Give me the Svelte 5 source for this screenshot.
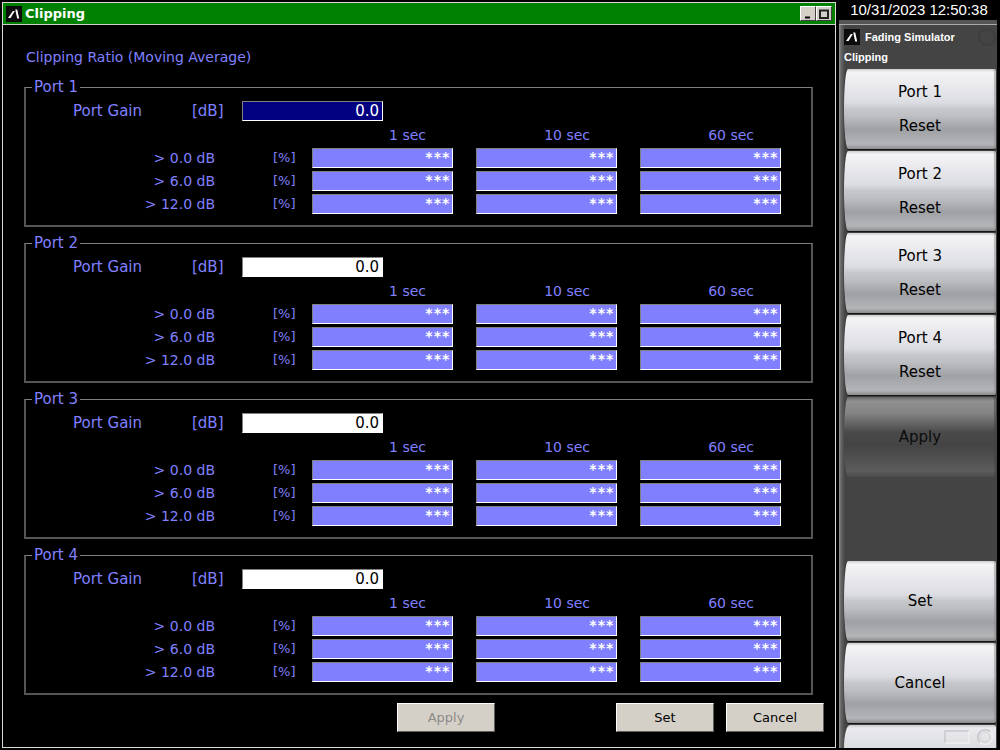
<script lang="ts">
    type Port = {
        name: string,
        gain: string,
    }

    const periods = ["1 sec", "10 sec", "60 sec"];
    const thresholds = ["0.0 dB", "6.0 dB", "12.0 dB"];

    let ports: Port[] = $state([
        { name: "Port 1", gain: "0.0" },
        { name: "Port 2", gain: "0.0" },
        { name: "Port 3", gain: "0.0" },
        { name: "Port 4", gain: "0.0" },
    ]);
    let selected = $state(0);

    const reset = (index: number) => {
        ports[index].gain = "0.0";
    };
</script>

{#snippet logo()}
    <svg class="logo" viewBox="0 0 16 16" aria-hidden="true">
        <rect width="16" height="16" fill="#0c0c0c" />
        <path d="M2 12 L6.8 5 L8.8 5 L4.6 12Z" fill="#fff" />
        <path d="M9.2 3.5 L11.2 3.5 L13.2 12.5 L11.2 12.5Z" fill="#fff" />
    </svg>
{/snippet}

<div class="screen">
    <main class="window">
        <header class="titlebar">
            {@render logo()}
            <h1>Clipping</h1>
            <button class="winbtn" aria-label="Minimize">
                <svg viewBox="0 0 12 12"><path d="M3 9.5h5" stroke="#000" stroke-width="2" /></svg>
            </button>
            <button class="winbtn" aria-label="Maximize">
                <svg viewBox="0 0 12 12"><path d="M2 2.5h8v7.5h-8z" fill="none" stroke="#222" stroke-width="2" /></svg>
            </button>
        </header>

        <div class="body">
            <h2>Clipping Ratio (Moving Average)</h2>

            {#each ports as port, i}
                <fieldset>
                    <legend>{port.name}</legend>
                    <div class="gain">
                        <label for="gain-{i}">Port Gain</label>
                        <span class="unit">[dB]</span>
                        <input
                            id="gain-{i}"
                            class:selected={selected === i}
                            bind:value={port.gain}
                            onfocus={() => (selected = i)}
                        />
                    </div>
                    <table>
                        <colgroup>
                            <col class="col-label" />
                            <col class="col-unit" />
                            <col span="3" />
                        </colgroup>
                        <thead>
                            <tr>
                                <td></td>
                                <td></td>
                                {#each periods as period}
                                    <th scope="col">{period}</th>
                                {/each}
                            </tr>
                        </thead>
                        <tbody>
                            {#each thresholds as threshold}
                                <tr>
                                    <th scope="row">&gt; {threshold}</th>
                                    <td class="percent">[%]</td>
                                    {#each periods as _}
                                        <td class="value"><span>***</span></td>
                                    {/each}
                                </tr>
                            {/each}
                        </tbody>
                    </table>
                </fieldset>
            {/each}

            <footer>
                <button class="apply" disabled>Apply</button>
                <button>Set</button>
                <button>Cancel</button>
            </footer>
        </div>
    </main>

    <aside>
        <time datetime="2023-10-31T12:50:38">10/31/2023 12:50:38</time>
        <nav>
            <div class="menu-title">
                <div class="app-name">
                    {@render logo()}
                    <span>Fading Simulator</span>
                    <i class="lamp"></i>
                </div>
                <div>Clipping</div>
            </div>
            {#each ports as port, i}
                <button class="softkey" onclick={() => reset(i)}>
                    <span>{port.name}</span>
                    <span>Reset</span>
                </button>
            {/each}
            <button class="softkey" disabled>Apply</button>
            <div class="blank"></div>
            <button class="softkey">Set</button>
            <button class="softkey">Cancel</button>
            <div class="pager">
                <svg viewBox="0 0 52 22" aria-hidden="true">
                    <path d="M1 18V6h24" fill="none" stroke="#c8c8cc" stroke-width="1.5" />
                    <path d="M25 6v12H1" fill="none" stroke="#eeeef0" stroke-width="1.5" />
                    <circle cx="41" cy="12" r="7.5" fill="none" stroke="#eeeef0" stroke-width="1.5" />
                    <path d="M35.7 17.3a7.5 7.5 0 0 1 10.6-10.6" fill="none" stroke="#c4c4c8" stroke-width="1.5" />
                    <circle cx="41" cy="12" r="5" fill="none" stroke="#d0d0d4" />
                </svg>
            </div>
        </nav>
    </aside>
</div>

<style>
    :global(body) {
        background: #000;
    }

    .screen {
        display: flex;
        box-sizing: border-box;
        height: 100vh;
        min-height: 750px;
        padding: 2px 3px 2px 2px;
        overflow: hidden;
        font-family: "DejaVu Sans", sans-serif;
        font-size: 14px;
        line-height: 20px;
        color: #8080ff;
    }

    button,
    input {
        margin: 0;
        padding: 0;
        font: inherit;
        border-radius: 0;
    }

    h1,
    h2 {
        margin: 0;
    }

    .logo {
        display: block;
        flex: none;
        width: 16px;
        height: 16px;
    }

    .window {
        flex: 1;
        border: 1px solid #dcdad4;
        margin-right: 3px;
    }

    .titlebar {
        display: flex;
        align-items: center;
        height: 21px;
        padding: 0 3px;
        background: #008000;
        border-bottom: 1px solid #d4d0c8;
    }

    .titlebar h1 {
        flex: 1;
        margin-left: 3px;
        font-size: 13px;
        color: #fff;
    }

    .winbtn {
        width: 16px;
        height: 15px;
        background: #d4d0c8;
        border: 1px solid;
        border-color: #fff #404040 #404040 #fff;
    }

    .winbtn svg {
        display: block;
        width: 12px;
        height: 12px;
        margin: auto;
    }

    .body {
        padding: 22px 22px 0 21px;
    }

    h2 {
        margin: 0 0 11px 2px;
        font-size: 14px;
        font-weight: normal;
    }

    fieldset {
        min-width: 0;
        margin: 0 0 7px;
        padding: 5px 0 8px;
        border: 2px solid #555;
        border-top: 1px solid #808080;
    }

    legend {
        margin-left: 6px;
        padding: 0 2px;
        font-size: 15px;
        line-height: 18px;
    }

    .gain {
        display: flex;
        padding-left: 47px;
        font-size: 15px;
    }

    .gain label {
        width: 119px;
    }

    .gain .unit {
        width: 50px;
    }

    input {
        box-sizing: border-box;
        width: 141px;
        height: 20px;
        padding-right: 3px;
        font-size: 15px;
        text-align: right;
        color: #000;
        background: #fff;
        border: 1px solid;
        border-color: #808080 #fff #fff #808080;
        outline: none;
    }

    input.selected {
        color: #fff;
        background: #000080;
    }

    table {
        width: calc(100% - 7px);
        table-layout: fixed;
        border-collapse: collapse;
    }

    .col-label {
        width: 189px;
    }

    .col-unit {
        width: 97px;
    }

    th,
    td {
        padding: 0;
        font-weight: normal;
        text-align: right;
    }

    thead th {
        height: 27px;
        padding-right: 50px;
    }

    tbody th,
    .percent,
    .value {
        padding-bottom: 3px;
    }

    .percent {
        padding-left: 58px;
        font-size: 13px;
        text-align: left;
    }

    .value {
        padding-right: 23px;
    }

    .value span {
        display: block;
        box-sizing: border-box;
        height: 20px;
        padding-right: 2px;
        font-family: "DejaVu Sans Mono", monospace;
        font-weight: bold;
        line-height: 16px;
        color: #fff;
        background: #8080ff;
        border: 1px solid;
        border-color: #808080 #fff #fff #808080;
    }

    footer {
        display: flex;
        justify-content: flex-end;
        gap: 12px;
        margin: 8px -11px 0 0;
    }

    footer button {
        width: 98px;
        height: 29px;
        color: #000;
        background: #d4d0c8;
        border: 1px solid;
        border-color: #fff #606060 #606060 #fff;
        font-size: 13px;
    }

    footer .apply {
        margin-right: 109px;
        color: #8c8c88;
    }

    aside {
        display: flex;
        flex: none;
        flex-direction: column;
        width: 158px;
    }

    time {
        height: 18px;
        padding-left: 2px;
        font-family: "Liberation Sans", sans-serif;
        font-size: 15px;
        line-height: 16px;
        text-align: center;
        color: #fff;
    }

    nav {
        display: flex;
        flex: 1;
        flex-direction: column;
        gap: 2px;
        min-height: 0;
        padding: 0 1px 0 5px;
        background: linear-gradient(90deg, #909090, #666 2px, #444 6px);
        border-top: 4px solid #555;
        box-shadow: inset 0 1px #aaa;
    }

    .menu-title {
        height: 43px;
        font: bold 11px/20px "Liberation Sans", sans-serif;
        color: #fff;
    }

    .app-name {
        display: flex;
        align-items: center;
        gap: 5px;
        padding-top: 3px;
    }

    .lamp {
        width: 14px;
        height: 14px;
        margin-left: auto;
        border: 2px solid #3e3e3e;
        border-radius: 50%;
    }

    .softkey {
        display: flex;
        flex: none;
        flex-direction: column;
        align-items: center;
        justify-content: center;
        height: 80px;
        font-size: 15px;
        line-height: 34px;
        color: #000;
        background: linear-gradient(#d0d0d0, #f4f4f6 4%, #eaeaee 20%, #dcdde2 42%, #c6c7cb 50%, #bfc0c4 58%, #a0a1a4 76%, #b4b5b8 94%, #8c8c8e);
        border: 0;
        border-radius: 4px 2px 2px 4px / 40px 2px 2px 40px;
        box-shadow: 0 1px 1px #111, inset -2px 0 1px #8888;
    }

    .softkey:disabled {
        color: #0c0c0c;
        background: linear-gradient(#666, #909090 5%, #848484 20%, #4a4a4a 44%, #444 60%, #5c5c5c 92%, #4c4c4c);
        box-shadow: inset -2px 0 1px #4448;
    }

    .blank {
        flex: none;
        height: 80px;
    }

    .pager {
        display: flex;
        flex: 1;
        justify-content: flex-end;
        overflow: hidden;
        background: linear-gradient(#c8c8cc, #eaeaee 3px, #dcdde0);
        border-radius: 6px 2px 0 0 / 24px 2px 0 0;
    }

    .pager svg {
        width: 52px;
        height: 22px;
    }
</style>
